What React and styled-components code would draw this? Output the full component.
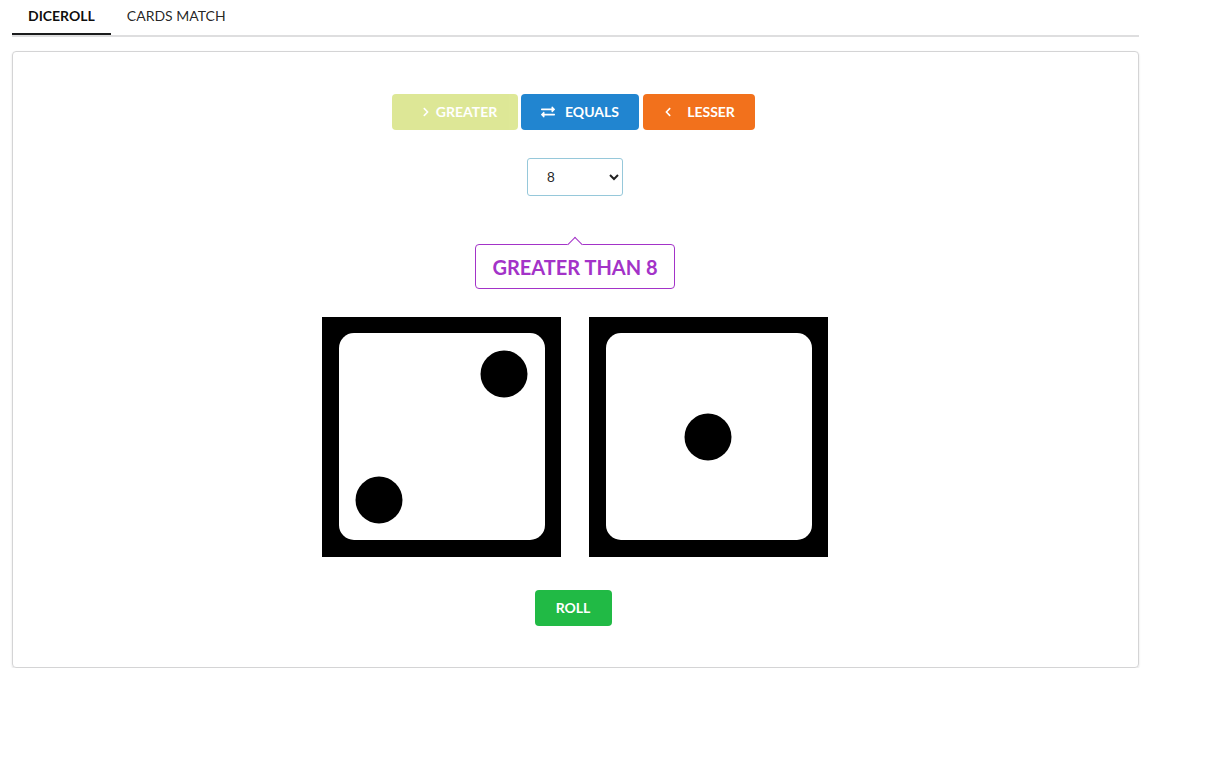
import React, { useState } from "react";
import styled, { createGlobalStyle } from "styled-components";
import { FaChevronRight, FaChevronLeft, FaExchangeAlt } from "react-icons/fa";

const GlobalStyle = createGlobalStyle`
  html, body {
    margin: 0;
    padding: 0;
    background: #fff;
    font-family: Lato, "Helvetica Neue", Arial, sans-serif;
    font-size: 14px;
    color: rgba(0, 0, 0, 0.87);
  }
`;

const Page = styled.div`
  width: 1127px;
  padding: 0 12px;
`;

const TabMenu = styled.div`
  display: flex;
  border-bottom: 2px solid rgba(34, 36, 38, 0.15);
  height: 35px;
`;

const Tab = styled.div`
  display: flex;
  align-items: center;
  padding: 0 16px 3px;
  height: 35px;
  margin-bottom: -2px;
  border-bottom: 2px solid ${(p) => (p.active ? "#1b1c1d" : "transparent")};
  font-weight: ${(p) => (p.active ? 700 : 400)};
  color: ${(p) => (p.active ? "rgba(0,0,0,.95)" : "rgba(0,0,0,.87)")};
  font-size: 14px;
  box-sizing: border-box;
  cursor: pointer;
`;

const Card = styled.div`
  margin-top: 14px;
  border: 1px solid #d4d4d5;
  border-radius: 4px;
  box-shadow: 0 1px 2px 0 rgba(34, 36, 38, 0.15);
  padding: 42px 3px 41px 0;
  display: flex;
  flex-direction: column;
  align-items: center;
`;

const ButtonRow = styled.div`
  display: flex;
  gap: 3px;
  margin-left: -1px;

  & > :last-child {
    margin-left: 1px;
  }
`;

const Button = styled.button`
  display: flex;
  align-items: center;
  justify-content: center;
  height: 36px;
  width: ${(p) => p.w}px;
  border: none;
  border-radius: 4px;
  background: ${(p) => p.bg};
  opacity: ${(p) => (p.disabled ? 0.45 : 1)};
  color: #fff;
  font-family: Lato, "Helvetica Neue", Arial, sans-serif;
  font-weight: 700;
  font-size: 14px;
  padding: 0 0 1px ${(p) => p.shift || 0}px;
  cursor: pointer;

  svg {
    margin-right: ${(p) => p.gap}px;
  }
`;

const Select = styled.select`
  margin-top: 28px;
  margin-left: 2px;
  width: 96px;
  height: 38px;
  border: 1px solid #96c8da;
  border-radius: 3px;
  padding: 0 8px 0 15px;
  font-family: "Liberation Sans", Arial, sans-serif;
  font-size: 14px;
  color: rgba(0, 0, 0, 0.87);
  background: #fff;
  outline: none;
`;

const PointingLabel = styled.div`
  position: relative;
  margin-top: 48px;
  margin-left: 2px;
  width: 200px;
  height: 45px;
  box-sizing: border-box;
  border: 1px solid #a333c8;
  border-radius: 4px;
  color: #a333c8;
  font-weight: 700;
  font-size: 20px;
  display: flex;
  align-items: center;
  justify-content: center;
  background: #fff;

  &::before {
    content: "";
    position: absolute;
    top: -6px;
    left: 50%;
    width: 10px;
    height: 10px;
    background: #fff;
    border-top: 1px solid #a333c8;
    border-left: 1px solid #a333c8;
    transform: translateX(-50%) rotate(45deg);
  }
`;

const DiceRow = styled.div`
  display: flex;
  gap: 28px;
  margin-top: 28px;
  margin-left: 1px;
`;

const RollButton = styled(Button)`
  margin-top: 33px;
  margin-right: 2px;
  width: 77px;
`;

const PIPS = {
  1: [[119, 120]],
  2: [
    [182, 57],
    [57, 183],
  ],
  3: [
    [182, 57],
    [119, 120],
    [57, 183],
  ],
};

function Die({ value }) {
  return (
    <svg width="239" height="240" viewBox="0 0 239 240">
      <rect width="239" height="240" fill="#000" />
      <rect x="17" y="16" width="206" height="207" rx="15" fill="#fff" />
      {PIPS[value].map(([cx, cy], i) => (
        <circle key={i} cx={cx} cy={cy} r="23.5" fill="#000" />
      ))}
    </svg>
  );
}

export default function App() {
  const [target, setTarget] = useState(8);
  const [dice] = useState([2, 1]);

  return (
    <Page>
      <GlobalStyle />
      <TabMenu>
        <Tab active>DICEROLL</Tab>
        <Tab>CARDS MATCH</Tab>
      </TabMenu>
      <Card>
        <ButtonRow>
          <Button bg="#b5cc18" w={126} gap={5} shift={8} disabled>
            <FaChevronRight size={10} />
            GREATER
          </Button>
          <Button bg="#2185d0" w={118} gap={10}>
            <FaExchangeAlt size={14} />
            EQUALS
          </Button>
          <Button bg="#f2711c" w={112} gap={14}>
            <FaChevronLeft size={10} />
            LESSER
          </Button>
        </ButtonRow>
        <Select value={target} onChange={(e) => setTarget(e.target.value)}>
          {[2, 3, 4, 5, 6, 7, 8, 9, 10, 11, 12].map((n) => (
            <option key={n} value={n}>
              {n}
            </option>
          ))}
        </Select>
        <PointingLabel>GREATER THAN {target}</PointingLabel>
        <DiceRow>
          {dice.map((d, i) => (
            <Die key={i} value={d} />
          ))}
        </DiceRow>
        <RollButton bg="#21ba45">ROLL</RollButton>
      </Card>
    </Page>
  );
}
